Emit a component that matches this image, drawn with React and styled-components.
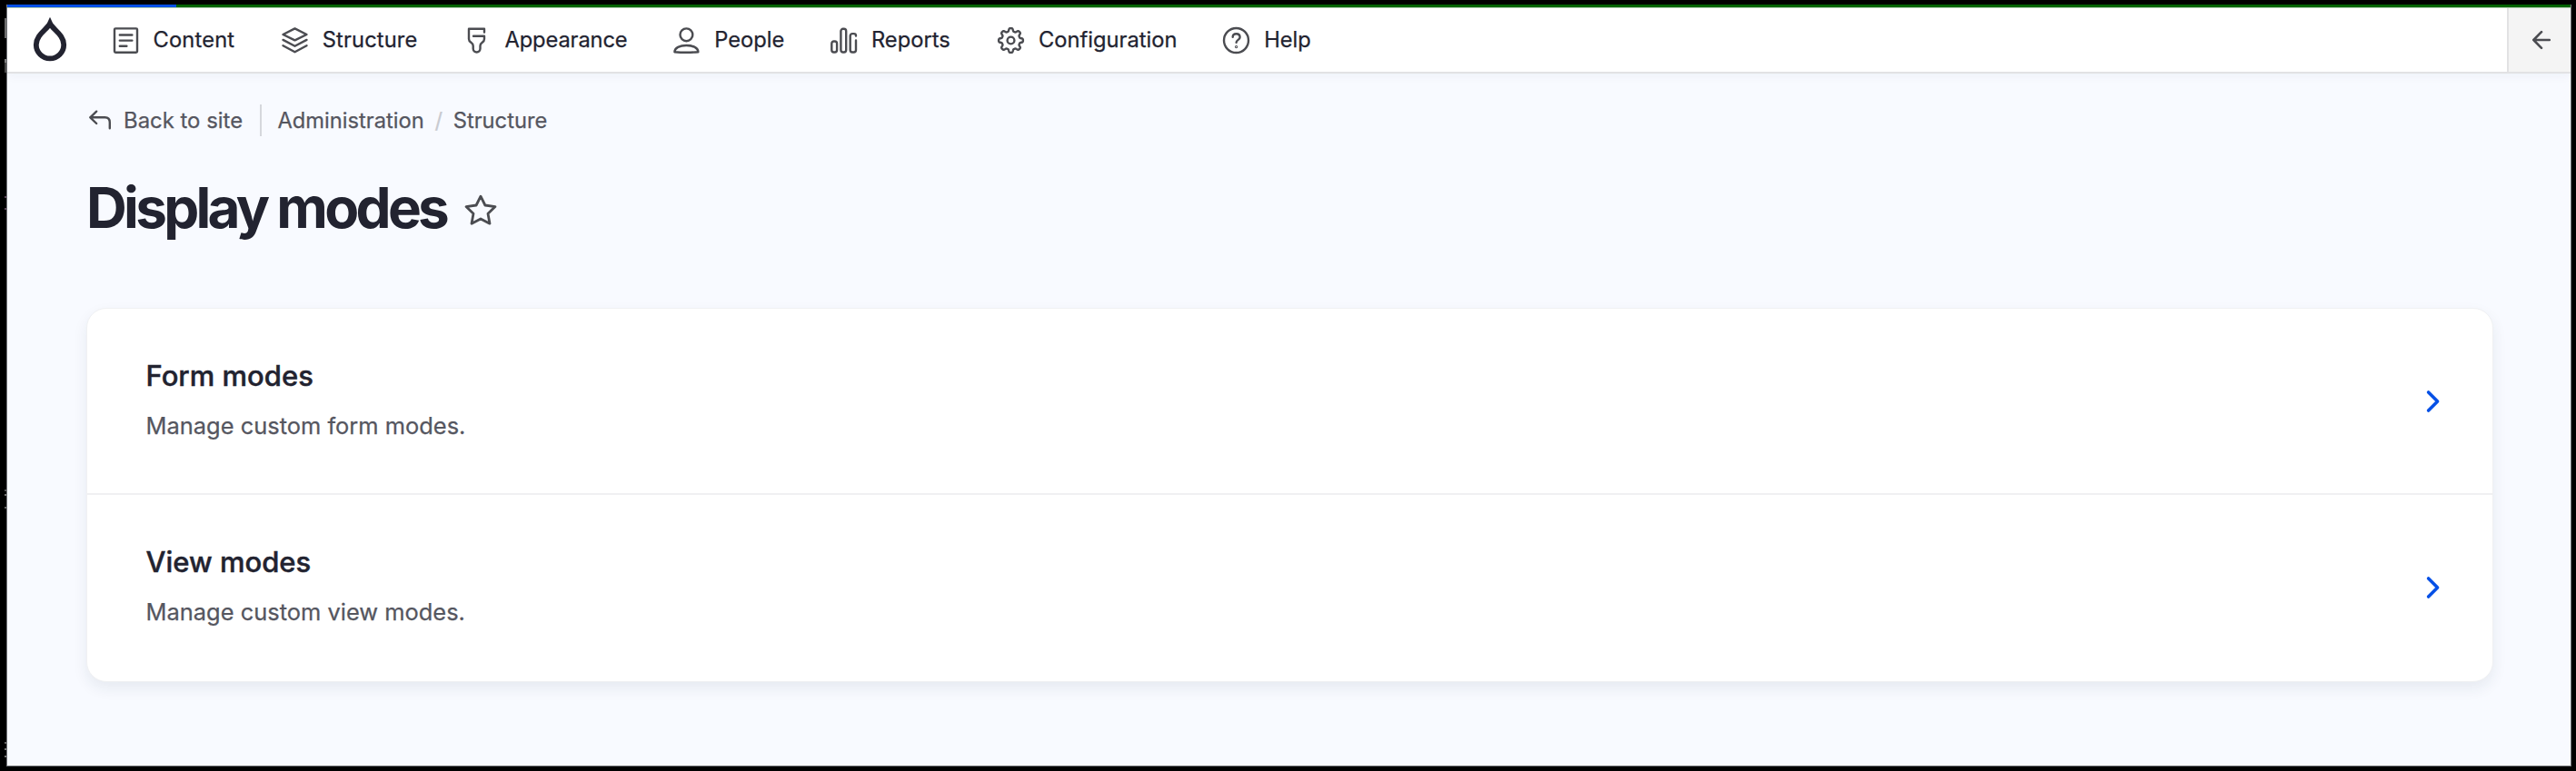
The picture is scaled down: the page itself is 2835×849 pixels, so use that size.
import React from "react";
import styled, { createGlobalStyle } from "styled-components";

const GlobalStyle = createGlobalStyle`
  *, *::before, *::after { box-sizing: border-box; }
  body {
    margin: 0;
    background: #000;
    color: #222330;
    font-family: Inter, "Liberation Sans", sans-serif;
    -webkit-text-stroke: 0.25px currentColor;
  }
  h1, h2, p { margin: 0; }
  a { color: inherit; text-decoration: none; }
`;

const Desktop = styled.div`
  position: relative;
  height: 849px;
  padding: 5px 5px 5px 7px;
  background: #000;
  overflow: hidden;
`;

const EdgeMark = styled.span`
  position: absolute;
  left: 5px;
  top: ${(p) => p.$top}px;
  width: 2px;
  height: ${(p) => p.$height}px;
  background: ${(p) => p.$color};
`;

const Window = styled.div`
  height: 839px;
  display: flex;
  flex-direction: column;
  background: #f8faff;
  border: solid #74767a;
  border-width: 0 1px 1px;
`;

const ProgressTrack = styled.div`
  flex: none;
  height: 4px;
  background: #006400;
  border-bottom: 1px solid #b0cdb0;
`;

const ProgressValue = styled.div`
  width: 186px;
  height: 3px;
  background: #0550e6;
`;

const Header = styled.header`
  flex: none;
  display: flex;
  height: 72px;
  background: #fff;
  border-bottom: 2px solid #e2e2e4;
  box-shadow: 0 3px 10px rgba(20, 45, 82, 0.045);
`;

const LogoLink = styled.a`
  display: flex;
  padding: 10px 0 0 27px;
  width: 115.5px;
`;

const Nav = styled.nav`
  display: flex;
  flex: 1;
  align-items: center;
`;

const NavItem = styled.a`
  display: flex;
  align-items: center;
  gap: 16px;
  width: ${(p) => p.$width}px;
  font-size: 23.7px;
  line-height: 30px;
  letter-spacing: ${(p) => p.$spacing || 0}px;
  white-space: nowrap;
`;

const Icon = styled.svg`
  flex: none;
  display: block;
  overflow: visible;
  fill: none;
  stroke: ${(p) => p.$color || "#4b4c51"};
  stroke-width: ${(p) => p.$weight || 2.4};
  stroke-linecap: round;
  stroke-linejoin: round;
`;

const Collapse = styled.button`
  display: flex;
  align-items: center;
  justify-content: center;
  width: 70px;
  padding: 0 0 0 3px;
  border: 0;
  border-left: 2px solid #e2e2e4;
  background: #f4f4f4;
`;

const Main = styled.main`
  padding: 34px 85px 0 87px;
`;

const Breadcrumb = styled.nav`
  display: flex;
  align-items: center;
  height: 35px;
  color: #55565f;
  font-size: 23.9px;
  line-height: 36px;
  white-space: nowrap;
`;

const BackLink = styled.a`
  display: flex;
  align-items: center;
  gap: 12px;
  width: 191px;
  padding-left: 2px;
`;

const Divider = styled.span`
  width: 2px;
  height: 35px;
  margin-right: 17.5px;
  background: #d5d7dc;
`;

const Crumb = styled.a`
  font-size: 23.7px;
`;

const Slash = styled.span`
  width: 32px;
  text-align: center;
  color: #c8cad0;
`;

const TitleRow = styled.div`
  display: flex;
  align-items: center;
  height: 74px;
  margin-top: 42px;
`;

const Title = styled.h1`
  width: 416px;
  font-size: 62px;
  font-weight: 700;
  line-height: 74px;
  letter-spacing: -0.06em;
  white-space: nowrap;
  -webkit-text-stroke: 0;
`;

const Card = styled.ul`
  margin: 73px 0 0;
  padding: 0;
  list-style: none;
  background: #fff;
  border: 1px solid #f0f1f3;
  border-radius: 22px;
  box-shadow: 0 7px 16px rgba(20, 45, 82, 0.08);
`;

const CardItem = styled.li`
  display: flex;
  align-items: center;
  justify-content: space-between;
  height: 205px;
  padding: 0 57px 0 64.5px;
  border-bottom: 2px solid ${(p) => (p.$last ? "transparent" : "#f0f0f2")};
`;

const ItemText = styled.div`
  display: flex;
  flex-direction: column;
  gap: 16px;
  padding-bottom: 1px;
`;

const ItemTitle = styled.h2`
  font-size: 31px;
  font-weight: 500;
  line-height: 40px;
  -webkit-text-stroke: 0.45px currentColor;
`;

const ItemDescription = styled.p`
  color: #55565f;
  font-size: 25.45px;
  line-height: 38px;
`;

const gearPoints = Array.from({ length: 160 }, (_, i) => {
  const angle = (i / 160) * Math.PI * 2;
  const radius = 11.75 + 1.65 * (Math.tanh(2 * Math.cos(8 * angle)) / Math.tanh(2));
  const x = 14.5 + radius * Math.sin(angle);
  const y = 14.5 - radius * Math.cos(angle);
  return `${x.toFixed(2)},${y.toFixed(2)}`;
}).join(" ");

const icons = {
  content: (
    <>
      <rect x="2" y="1.4" width="25" height="26.3" rx="1.2" />
      <path d="M7.8 8.5H21.4M7.8 14.6H21.4M7.8 20.7H15.4" />
    </>
  ),
  structure: (
    <path d="M14.5 1.4 27.5 8 14.5 14.4 1.5 8ZM1.5 13.9 14.5 20.7 27.5 13.9M1.5 20.2 14.5 27.3 27.5 20.2" />
  ),
  appearance: (
    <path d="M23 5.6V1.7H6V13C6 17.3 10.7 16.3 10.7 20.5V23.6A3.9 3.9 0 0 0 18.5 23.6V20.5C18.5 16.3 23 17.3 23 13V9.7H11" />
  ),
  people: (
    <>
      <circle cx="14.4" cy="8.3" r="6.9" />
      <path d="M1.4 27.2C1.4 22.5 7.2 20 14.4 20S27.4 22.5 27.4 27.2C19 28 10 28 1.4 27.2Z" />
    </>
  ),
  reports: (
    <>
      <rect x="1.3" y="15.5" width="5.8" height="12" rx="2.4" />
      <rect x="11.4" y="1.8" width="5.8" height="25.7" rx="2.4" />
      <path d="M28 9.6V9.3A2.2 2.2 0 0 0 25.8 7.1H24.1A2.4 2.4 0 0 0 21.7 9.5V25.1A2.4 2.4 0 0 0 24.1 27.5H25.6A2.4 2.4 0 0 0 28 25.1V14.5" />
    </>
  ),
  configuration: (
    <>
      <polygon points={gearPoints} />
      <circle cx="14.5" cy="14.5" r="3.9" />
    </>
  ),
  help: (
    <>
      <circle cx="14.5" cy="14.5" r="13.5" />
      <path d="M10.7 10.8C10.7 8.6 12.3 7.3 14.6 7.3C17 7.3 18.6 8.9 18.6 11C18.6 13.8 14.6 14 14.6 16.8" />
      <circle cx="14.6" cy="21.6" r="0.5" />
    </>
  ),
};

const navItems = [
  { label: "Content", icon: "content", width: 186.3, spacing: 0.16 },
  { label: "Structure", icon: "structure", width: 200.7, spacing: 0.12 },
  { label: "Appearance", icon: "appearance", width: 230.7, spacing: -0.12 },
  { label: "People", icon: "people", width: 172.8 },
  { label: "Reports", icon: "reports", width: 184 },
  { label: "Configuration", icon: "configuration", width: 248.2 },
  { label: "Help", icon: "help", width: 120 },
];

const modes = [
  { title: "Form modes", description: "Manage custom form modes." },
  { title: "View modes", description: "Manage custom view modes." },
];

const edgeMarks = [
  { top: 20, height: 22, color: "#6e6e6e" },
  { top: 65, height: 4, color: "#808080" },
  { top: 69, height: 11, color: "#484848" },
  { top: 216, height: 2, color: "#5e475b" },
  { top: 229, height: 2, color: "#5e475b" },
  { top: 539, height: 2, color: "#555" },
  { top: 544, height: 2, color: "#777" },
  { top: 558, height: 2, color: "#666" },
  { top: 817, height: 2, color: "#666" },
  { top: 824, height: 2, color: "#777" },
  { top: 832, height: 2, color: "#777" },
];

export default function App() {
  return (
    <>
      <GlobalStyle />
      <Desktop>
        {edgeMarks.map((m) => (
          <EdgeMark key={m.top} $top={m.top} $height={m.height} $color={m.color} />
        ))}
        <Window>
          <ProgressTrack>
            <ProgressValue />
          </ProgressTrack>
          <Header>
            <LogoLink href="#" aria-label="Home">
              <svg width="40" height="48" viewBox="35 19 40 48" overflow="visible">
                <path
                  d="M55 25.8C52 32.5 39.8 38 39.8 49.2A15.2 15.2 0 0 0 70.2 49.2C70.2 38 58 32.5 55 25.8Z"
                  fill="none"
                  stroke="#222330"
                  strokeWidth="5.8"
                  strokeMiterlimit="10"
                />
              </svg>
            </LogoLink>
            <Nav>
              {navItems.map((item) => (
                <NavItem key={item.label} href="#" $width={item.width} $spacing={item.spacing}>
                  <Icon width="29" height="29" viewBox="0 0 29 29">
                    {icons[item.icon]}
                  </Icon>
                  {item.label}
                </NavItem>
              ))}
            </Nav>
            <Collapse aria-label="Collapse">
              <Icon width="20" height="20" viewBox="0 0 20 20" $weight={2.6}>
                <path d="M10 1.2 1.3 10 10 18.8M1.3 10H18.8" />
              </Icon>
            </Collapse>
          </Header>
          <Main>
            <Breadcrumb>
              <BackLink href="#">
                <Icon width="27" height="24" viewBox="97 121 27 24">
                  <path d="M106.2 122.7 99.3 129.3 106.2 136M99.3 129.3H115.5C119.2 129.3 120.8 131.3 120.8 134.8V141.3" />
                </Icon>
                Back to site
              </BackLink>
              <Divider />
              <Crumb href="#">Administration</Crumb>
              <Slash>/</Slash>
              <Crumb href="#">Structure</Crumb>
            </Breadcrumb>
            <TitleRow>
              <Title>Display modes</Title>
              <Icon width="36" height="36" viewBox="511 211 36 36" $weight={2.8}>
                <path d="M529 216.2 533.9 226 545 227.6 537 235.3 539 246.2 529 241 519 246.2 521 235.3 513 227.6 524.1 226Z" />
              </Icon>
            </TitleRow>
            <Card>
              {modes.map((mode, i) => (
                <CardItem key={mode.title} $last={i === modes.length - 1}>
                  <ItemText>
                    <ItemTitle>{mode.title}</ItemTitle>
                    <ItemDescription>{mode.description}</ItemDescription>
                  </ItemText>
                  <Icon width="16" height="24" viewBox="0 0 16 24" $color="#0550e6" $weight={3.6}>
                    <path d="M2.6 2 12.6 12 2.6 22" />
                  </Icon>
                </CardItem>
              ))}
            </Card>
          </Main>
        </Window>
      </Desktop>
    </>
  );
}
